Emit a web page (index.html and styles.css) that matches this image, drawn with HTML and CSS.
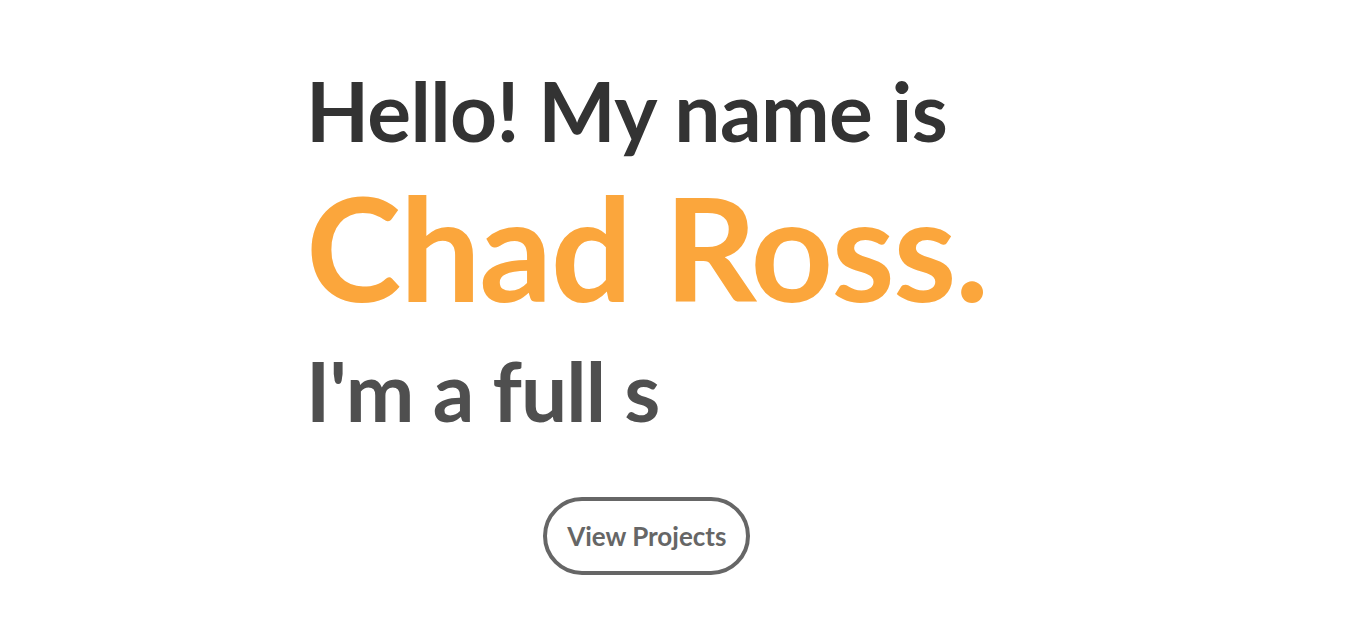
FILE: index.html
```html
<!DOCTYPE html>
<html>
<head>
<meta charset="utf-8">
<link rel="stylesheet" href="styles.css">
</head>
<body>
<main class="hero">
  <div class="intro">
    <h1 class="greeting">Hello! My name is</h1>
    <h2 class="name">Chad Ross.</h2>
    <p class="role">I'm a full s</p>
    <a class="btn" href="#">View Projects</a>
  </div>
</main>
</body>
</html>
```
FILE: styles.css
```css
html, body {
  margin: 0;
  padding: 0;
  background: #fff;
}
body {
  font-family: Lato, "Open Sans", sans-serif;
}
.hero {
  padding: 61px 0 0 306px;
}
.intro {
  display: inline-flex;
  flex-direction: column;
  align-items: flex-start;
}
.greeting {
  margin: 0;
  font-size: 82px;
  line-height: 1.2;
  font-weight: 700;
  color: #333333;
  letter-spacing: -0.6px;
}
.name {
  margin: 16px 0 0;
  font-size: 144px;
  line-height: 1;
  font-weight: 700;
  color: #fba63c;
  letter-spacing: -1.6px;
}
.role {
  margin: 22px 0 0;
  font-size: 82px;
  line-height: 1.2;
  font-weight: 700;
  color: #4f4f4f;
  letter-spacing: -0.9px;
}
.btn {
  align-self: center;
  margin-top: 57px;
  box-sizing: border-box;
  height: 78px;
  padding: 0 20px;
  display: flex;
  align-items: center;
  border: 4px solid #666666;
  border-radius: 40px;
  color: #666666;
  text-decoration: none;
  font-size: 26px;
  font-weight: 700;
}
```
